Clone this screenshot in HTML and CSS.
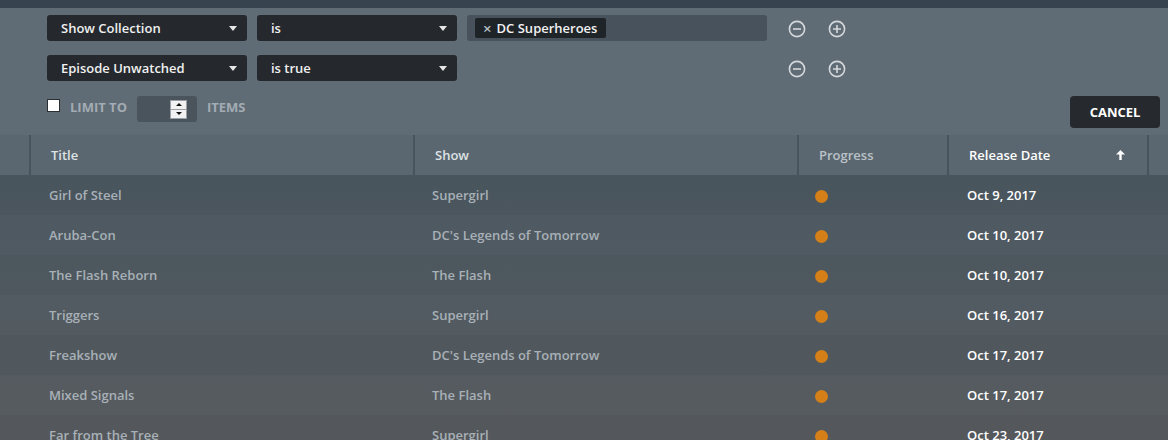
FILE: index.html
```html
<!DOCTYPE html>
<html>
<head>
<meta charset="utf-8">
<link rel="stylesheet" href="styles.css">
</head>
<body>
<div class="topbar"></div>
<section class="filters">
  <div class="frow">
    <div class="select"><span>Show Collection</span><i class="caret"></i></div>
    <div class="select"><span>is</span><i class="caret"></i></div>
    <div class="tags"><span class="tag"><span class="x">×</span>DC Superheroes</span></div>
    <div class="icons">
      <svg class="ico" viewBox="0 0 18 18"><circle cx="9" cy="9" r="7.6"/><path d="M5 9h8"/></svg>
      <svg class="ico" viewBox="0 0 18 18"><circle cx="9" cy="9" r="7.6"/><path d="M5 9h8M9 5v8"/></svg>
    </div>
  </div>
  <div class="frow">
    <div class="select"><span>Episode Unwatched</span><i class="caret"></i></div>
    <div class="select"><span>is true</span><i class="caret"></i></div>
    <div class="spacer"></div>
    <div class="icons">
      <svg class="ico" viewBox="0 0 18 18"><circle cx="9" cy="9" r="7.6"/><path d="M5 9h8"/></svg>
      <svg class="ico" viewBox="0 0 18 18"><circle cx="9" cy="9" r="7.6"/><path d="M5 9h8M9 5v8"/></svg>
    </div>
  </div>
  <div class="limitrow">
    <span class="check"></span>
    <span class="lbl">LIMIT TO</span>
    <span class="num"><span class="spin"><i class="up"></i><i class="down"></i></span></span>
    <span class="lbl">ITEMS</span>
    <button class="cancel">CANCEL</button>
  </div>
</section>
<section class="table">
  <div class="thead">
    <div class="c c0"></div>
    <div class="c c1">Title</div>
    <div class="c c2">Show</div>
    <div class="c c3 dim">Progress</div>
    <div class="c c4 sorted">Release Date
      <svg class="arrow" viewBox="0 0 9 10"><path d="M4.5 0L9 4.6H5.7V10H3.3V4.6H0Z"/></svg>
    </div>
    <div class="c c5"></div>
  </div>
  <div class="tbody">
    <div class="row"><div></div><div class="t">Girl of Steel</div><div class="t">Supergirl</div><div class="p"><i class="dot"></i></div><div class="d">Oct 9, 2017</div><div></div></div>
    <div class="row"><div></div><div class="t">Aruba-Con</div><div class="t">DC's Legends of Tomorrow</div><div class="p"><i class="dot"></i></div><div class="d">Oct 10, 2017</div><div></div></div>
    <div class="row"><div></div><div class="t">The Flash Reborn</div><div class="t">The Flash</div><div class="p"><i class="dot"></i></div><div class="d">Oct 10, 2017</div><div></div></div>
    <div class="row"><div></div><div class="t">Triggers</div><div class="t">Supergirl</div><div class="p"><i class="dot"></i></div><div class="d">Oct 16, 2017</div><div></div></div>
    <div class="row"><div></div><div class="t">Freakshow</div><div class="t">DC's Legends of Tomorrow</div><div class="p"><i class="dot"></i></div><div class="d">Oct 17, 2017</div><div></div></div>
    <div class="row"><div></div><div class="t">Mixed Signals</div><div class="t">The Flash</div><div class="p"><i class="dot"></i></div><div class="d">Oct 17, 2017</div><div></div></div>
    <div class="row"><div></div><div class="t">Far from the Tree</div><div class="t">Supergirl</div><div class="p"><i class="dot"></i></div><div class="d">Oct 23, 2017</div><div></div></div>
  </div>
</section>
</body>
</html>
```

FILE: styles.css
```css
html, body {
  margin: 0;
  padding: 0;
  height: 440px;
  overflow: hidden;
}
body {
  font-family: "Open Sans", "Liberation Sans", sans-serif;
  font-size: 13px;
  font-weight: 600;
  background: #545c63;
  color: #eee;
}
.topbar {
  height: 8px;
  background: #37434e;
}
.filters {
  background: #5f6b75;
  padding: 7px 8px 7px 47px;
}
.frow {
  display: flex;
  align-items: center;
  gap: 10px;
  height: 26px;
  margin-bottom: 14px;
}
.frow + .frow { margin-bottom: 15px; }
.select {
  width: 200px;
  height: 26px;
  box-sizing: border-box;
  background: #25292d;
  border-radius: 3px;
  padding: 0 10px 0 14px;
  display: flex;
  align-items: center;
  justify-content: space-between;
  color: #f0f0f0;
}
.caret {
  width: 0;
  height: 0;
  border-left: 4px solid transparent;
  border-right: 4px solid transparent;
  border-top: 5px solid #e6e6e6;
}
.tags, .spacer {
  width: 300px;
  height: 26px;
  box-sizing: border-box;
}
.tags {
  background: rgba(30, 38, 46, 0.35);
  border-radius: 3px;
  padding-left: 8px;
  display: flex;
  align-items: center;
}
.tag {
  height: 20px;
  background: #1f2428;
  border-radius: 2px;
  padding: 0 9px 0 8px;
  display: flex;
  align-items: center;
  color: #f2f2f2;
}
.tag .x {
  color: #b9c1c8;
  font-size: 15px;
  line-height: 20px;
  margin-right: 5px;
  font-weight: 600;
}
.icons {
  display: flex;
  gap: 22px;
  margin-left: 11px;
  padding-top: 2px;
}
.ico {
  width: 18px;
  height: 18px;
  fill: none;
  stroke: #d5d9dc;
  stroke-width: 1.6;
}
.limitrow {
  display: flex;
  align-items: flex-start;
  height: 32px;
}
.check {
  width: 11px;
  height: 11px;
  background: #fff;
  border: 1px solid #2a2f33;
  margin-top: 3px;
}
.lbl {
  color: #a3abb3;
  font-weight: 700;
  font-size: 13px;
  line-height: 20px;
  margin-top: 1px;
  margin-left: 10px;
}
.num {
  width: 60px;
  height: 26px;
  background: #4a545d;
  border-radius: 3px;
  margin-left: 10px;
  display: flex;
  align-items: center;
  justify-content: flex-end;
}
.spin {
  width: 15px;
  height: 17px;
  margin-right: 10px;
  background: #f2f2f2;
  border: 1px solid #9aa0a5;
  display: flex;
  flex-direction: column;
}
.spin i {
  flex: 1;
  display: flex;
  align-items: center;
  justify-content: center;
}
.spin .up { border-bottom: 1px solid #9aa0a5; }
.spin .up::after {
  content: "";
  border-left: 3px solid transparent;
  border-right: 3px solid transparent;
  border-bottom: 3px solid #111;
}
.spin .down::after {
  content: "";
  border-left: 3px solid transparent;
  border-right: 3px solid transparent;
  border-top: 3px solid #111;
}
.cancel {
  margin-left: auto;
  width: 90px;
  height: 32px;
  background: #262a2e;
  color: #fff;
  border: 0;
  border-radius: 4px;
  font-family: "Open Sans", "Liberation Sans", sans-serif;
  font-weight: 700;
  font-size: 13px;
  padding: 0;
}
.table {
  display: flex;
  flex-direction: column;
}
.thead, .row {
  display: grid;
  grid-template-columns: 29px 384px 384px 150px 200px 1fr;
  height: 40px;
}
.thead {
  background: #5b6770;
}
.thead .c {
  line-height: 40px;
  padding-left: 20px;
  color: #dde2e5;
}
.thead .c0 { padding-left: 0; }
.thead .c1, .thead .c2, .thead .c3, .thead .c4, .thead .c5 {
  border-left: 2px solid #48535c;
}
.thead .dim { color: #bac2c8; }
.thead .sorted {
  color: #fff;
  display: flex;
  align-items: center;
}
.arrow {
  width: 9px;
  height: 10px;
  fill: #fff;
  margin-left: 66px;
}
.tbody {
  background: linear-gradient(180deg, #4c5861 0%, #515b62 40%, #585b5e 100%);
}
.row {
  line-height: 40px;
}
.row:nth-child(odd) {
  background: rgba(0, 0, 0, 0.03);
}
.row .t {
  padding-left: 20px;
  color: #a8b0b7;
}
.row > .t:nth-child(3) { padding-left: 19px; }
.row .p {
  padding-left: 18px;
  display: flex;
  align-items: center;
}
.dot {
  width: 13px;
  height: 13px;
  border-radius: 50%;
  background: #d47f17;
  margin-top: 2px;
}
.row .d {
  padding-left: 20px;
  color: #fff;
}
```
